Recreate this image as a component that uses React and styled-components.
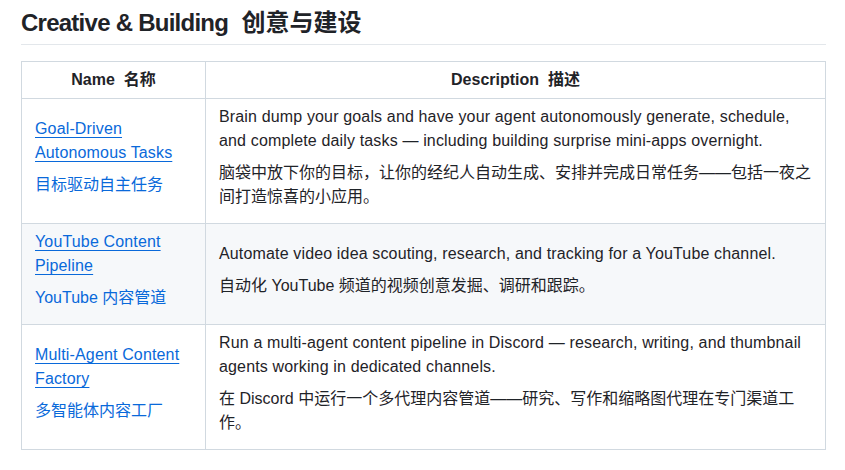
import React from "react";
import styled, { createGlobalStyle } from "styled-components";

const GlobalStyle = createGlobalStyle`
    body {
        margin: 0;
        background: #ffffff;
        color: #1f2328;
        font-family: "Liberation Sans", "Noto Sans CJK SC", sans-serif;
        font-size: 16px;
        line-height: 1.5;
    }
`;

const rows = [
    {
        en: "Goal-Driven Autonomous Tasks",
        zh: "目标驱动自主任务",
        desc: "Brain dump your goals and have your agent autonomously generate, schedule, and complete daily tasks — including building surprise mini-apps overnight.",
        descZh: "脑袋中放下你的目标，让你的经纪人自动生成、安排并完成日常任务——包括一夜之间打造惊喜的小应用。",
    },
    {
        en: "YouTube Content Pipeline",
        zh: "YouTube 内容管道",
        desc: "Automate video idea scouting, research, and tracking for a YouTube channel.",
        descZh: "自动化 YouTube 频道的视频创意发掘、调研和跟踪。",
    },
    {
        en: "Multi-Agent Content Factory",
        zh: "多智能体内容工厂",
        desc: "Run a multi-agent content pipeline in Discord — research, writing, and thumbnail agents working in dedicated channels.",
        descZh: "在 Discord 中运行一个多代理内容管道——研究、写作和缩略图代理在专门渠道工作。",
    },
];

export default function App() {
    return (
        <Page>
            <GlobalStyle />
            <Heading>
                <HeadingLatin>Creative &amp; Building</HeadingLatin>&nbsp; 创意与建设
            </Heading>
            <Table>
                <colgroup>
                    <col style={{ width: 184 }} />
                    <col />
                </colgroup>
                <thead>
                    <tr>
                        <Th>Name&nbsp; 名称</Th>
                        <Th>Description&nbsp; 描述</Th>
                    </tr>
                </thead>
                <tbody>
                    {rows.map((row, i) => (
                        <Row key={i} striped={i % 2 === 1}>
                            <Td>
                                <Para latin>
                                    <Link href="#">{row.en}</Link>
                                </Para>
                                <Para>
                                    <PlainLink href="#">{row.zh}</PlainLink>
                                </Para>
                            </Td>
                            <Td>
                                <Para latin>{row.desc}</Para>
                                <Para>{row.descZh}</Para>
                            </Td>
                        </Row>
                    ))}
                </tbody>
            </Table>
        </Page>
    );
}

const Page = styled.div`
    width: 805px;
    padding: 8px 0 0 21px;
`;
const Heading = styled.h2`
    margin: 0 0 16px;
    padding-bottom: 6px;
    font-size: 24px;
    font-weight: 600;
    line-height: 1.25;
    border-bottom: 1px solid #e3e7eb;
`;
const HeadingLatin = styled.span`
    letter-spacing: -0.75px;
`;
const Table = styled.table`
    width: 805px;
    border-collapse: collapse;
    border-spacing: 0;
    table-layout: fixed;
`;
const Th = styled.th`
    padding: 6px 13px;
    border: 1px solid #d1d9e0;
    font-weight: 600;
    text-align: center;
`;
const Row = styled.tr`
    background: ${(p) => (p.striped ? "#f6f8fa" : "#ffffff")};
`;
const Td = styled.td`
    padding: 6px 13px;
    border: 1px solid #d1d9e0;
    vertical-align: middle;
`;
const Para = styled.p`
    margin: 0 0 8px;
    letter-spacing: ${(p) => (p.latin ? "0.15px" : "normal")};
`;
const Link = styled.a`
    color: #0969da;
    text-decoration: underline;
    text-underline-offset: 3px;
`;
const PlainLink = styled.a`
    color: #0969da;
    text-decoration: none;
`;
